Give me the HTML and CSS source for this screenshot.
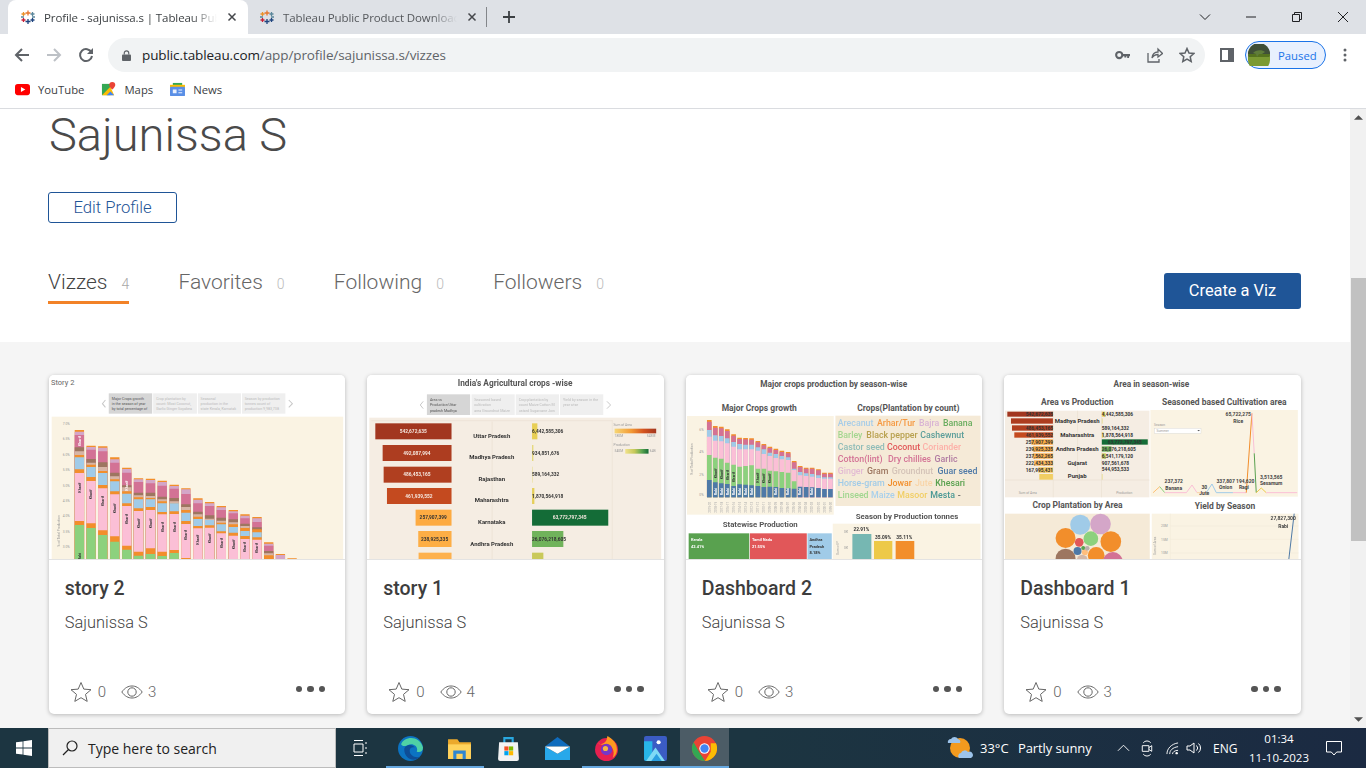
FILE: index.html
```html
<!DOCTYPE html>
<html lang="en">
<head>
<meta charset="utf-8">
<title>Profile - sajunissa.s | Tableau Public</title>
<link rel="stylesheet" href="styles.css">
</head>
<body>
<svg class="defs" width="0" height="0" aria-hidden="true">
  <defs>
    <symbol id="tableau" viewBox="0 0 16 16">
      <path stroke="#e8762b" d="M8 1.500v5M5.500 4h5"/>
      <path stroke="#1f447e" d="M8 10v5M5.500 12.500h5"/>
      <path stroke="#c72037" d="M3.500 9v4M1.500 11h4"/>
      <path stroke="#5b879b" d="M12.500 3v4M10.500 5h4"/>
      <path stroke="#eb9129" d="M3.500 3v4M1.500 5h4"/>
      <path stroke="#1f447e" d="M12.500 9v4M10.500 11h4"/>
      <path stroke="#59879b" d="M1 8h3M12 8h3"/>
    </symbol>
    <symbol id="star" viewBox="0 0 22 22">
      <path fill="none" stroke="#666" stroke-width="1" d="M11 1.500l2.800 6.600 7.200.6-5.500 4.700 1.700 7-6.200-3.700-6.200 3.700 1.700-7L1 8.700l7.200-.6z"/>
    </symbol>
    <symbol id="eye" viewBox="0 0 22 14">
      <path fill="none" stroke="#666" d="M.8 7C4 2.600 7.300 1 11 1s7 1.600 10.200 6C18 11.400 14.700 13 11 13S4 11.400.8 7z"/>
      <circle cx="11" cy="7" r="4.200" fill="none" stroke="#666"/>
    </symbol>
  </defs>
</svg>

<header class="chrome">
  <div class="tabstrip">
    <div class="tab tab-active">
      <svg class="fav"><use href="#tableau"/></svg>
      <span class="tab-title">Profile - sajunissa.s | Tableau Public</span>
      <svg class="tab-x" viewBox="0 0 10 10"><path d="M1.500 1.500l7 7M8.500 1.500l-7 7"/></svg>
    </div>
    <div class="tab tab-idle">
      <svg class="fav"><use href="#tableau"/></svg>
      <span class="tab-title">Tableau Public Product Download</span>
      <svg class="tab-x" viewBox="0 0 10 10"><path d="M1.500 1.500l7 7M8.500 1.500l-7 7"/></svg>
    </div>
    <span class="tab-sep"></span>
    <svg class="tab-plus" viewBox="0 0 12 12"><path d="M6 0v12M0 6h12"/></svg>
    <div class="win">
      <svg class="win-ico" viewBox="0 0 12 12"><path d="M1 3.500l5 5 5-5"/></svg>
      <svg class="win-ico" viewBox="0 0 12 12"><path d="M1 6h10"/></svg>
      <svg class="win-ico" viewBox="0 0 12 12"><path d="M1.500 3.500h7v7h-7zM3.500 3.500v-2h7v7h-2"/></svg>
      <svg class="win-ico" viewBox="0 0 12 12"><path d="M1 1l10 10M11 1L1 11"/></svg>
    </div>
  </div>
  <div class="toolbar">
    <svg class="nav" viewBox="0 0 16 16"><path class="nav-dark" d="M15 8H2M8 2L2 8l6 6"/></svg>
    <svg class="nav" viewBox="0 0 16 16"><path class="nav-off" d="M1 8h13M8 2l6 6-6 6"/></svg>
    <svg class="nav" viewBox="0 0 16 16"><path class="nav-dark" d="M13.500 5.500A6 6 0 1 0 14 9"/><path class="nav-fill" d="M15 1v6H9z"/></svg>
    <div class="omnibox">
      <svg class="lock" viewBox="0 0 10 12"><path fill="#5f6368" d="M1 5h8a1 1 0 0 1 1 1v5a1 1 0 0 1-1 1H1a1 1 0 0 1-1-1V6a1 1 0 0 1 1-1z"/><path fill="none" stroke="#5f6368" stroke-width="1.300" d="M2.500 5V3.300a2.500 2.500 0 0 1 5 0V5"/></svg>
      <span class="url"><b>public.tableau.com</b>/app/profile/sajunissa.s/vizzes</span>
      <svg class="omni-ico key" viewBox="0 0 16 10"><circle cx="4.500" cy="5" r="3.300" fill="none" stroke="#5f6368" stroke-width="2.200"/><path fill="#5f6368" d="M8 3.800h8v2.400h-1v2h-2v-2h-1v1.500h-2V6.200H8z"/></svg>
      <svg class="omni-ico share" viewBox="0 0 16 16"><path d="M1 6v9h11v-3M5 11c.5-4 3-6 6-6V2l4.500 4.500L11 10V7.500C8.500 7.500 6.500 8.500 5 11z"/></svg>
      <svg class="omni-ico star2" viewBox="0 0 16 16"><path d="M8 1.500l2 4.500 4.800.5-3.600 3.200 1 4.800L8 12.100l-4.200 2.400 1-4.800L1.200 6.500 6 6z"/></svg>
    </div>
    <svg class="panel" viewBox="0 0 14 14"><path fill="#5f6368" d="M0 0h14v14H0z"/><path fill="#fff" d="M2 2h6v10H2z"/></svg>
    <div class="paused">
      <svg class="avatar" viewBox="0 0 22 22"><circle cx="11" cy="11" r="11" fill="#55731f"/><path fill="#3f4f38" d="M0 10a11 11 0 0 1 22 0z"/><path fill="#7b9a33" d="M0 13h22v3a11 11 0 0 1-22 0z"/><path fill="#5f7d3a" d="M5 9c2-3 9-4 12-1l-3 2-3 0-2 3-1-3z"/></svg>
      <span>Paused</span>
    </div>
    <svg class="kebab" viewBox="0 0 4 14"><circle cx="2" cy="2" r="1.500"/><circle cx="2" cy="7" r="1.500"/><circle cx="2" cy="12" r="1.500"/></svg>
  </div>
  <div class="bookmarks">
    <span class="bm">
      <svg class="bm-ico" viewBox="0 0 16 12"><rect width="16" height="12" rx="3" fill="#f00"/><path fill="#fff" d="M6.300 3.300v5.400L11 6z"/></svg>YouTube
    </span>
    <span class="bm">
      <svg class="bm-ico" viewBox="0 0 16 16"><path fill="#34a853" d="M1 2h9v12H1z"/><path fill="#fbbc04" d="M1 14l9-9 4 9z"/><path fill="#4285f4" d="M6 14l4-4 4 4z"/><path fill="#ea4335" d="M12 0a3.200 3.200 0 0 1 3.200 3.200C15.200 5.500 12 8 12 8S8.800 5.500 8.800 3.200A3.200 3.200 0 0 1 12 0z"/></svg>Maps
    </span>
    <span class="bm">
      <svg class="bm-ico" viewBox="0 0 16 14"><path fill="#34a853" d="M3 0h10v4H3z"/><path fill="#fbbc04" d="M0 2h16v3H0z"/><rect y="4" width="16" height="10" rx="1" fill="#5a8fe6"/><path fill="#e8f0fe" d="M3 7h4v4H3zM9 7h4v1H9zM9 10h4v1H9z"/></svg>News
    </span>
  </div>
</header>

<div class="viewport">
  <main class="page">
    <section class="profile">
      <h1 class="name">Sajunissa S</h1>
      <a class="edit">Edit Profile</a>
      <div class="tabs-row">
        <nav class="tabs">
          <a class="ptab ptab-on">Vizzes<small>4</small></a>
          <a class="ptab">Favorites<small>0</small></a>
          <a class="ptab">Following<small>0</small></a>
          <a class="ptab">Followers<small>0</small></a>
        </nav>
        <a class="create">Create a Viz</a>
      </div>
    </section>
    <section class="gallery">

      <article class="card">
        <svg class="thumb" viewBox="27 15 888 552" preserveAspectRatio="none">
          <rect x="27" y="15" width="888" height="552" fill="#fff"/>
          <text x="33" y="46" class="t-story">Story 2</text>
          <path class="chev" d="M196 90l-9 11 9 11M745 90l11 11-11 11"/>
          <rect x="206" y="70" width="130" height="61" fill="#d6d6d6"/>
          <rect x="339" y="70" width="131" height="61" fill="#efefef"/>
          <rect x="473" y="70" width="129" height="61" fill="#efefef"/>
          <rect x="605" y="70" width="130" height="61" fill="#efefef"/>
          <g class="t-tab-on"><text x="215" y="91">Major Crops growth</text><text x="215" y="106">in the season of year</text><text x="215" y="121">by total percentage of</text></g>
          <g class="t-tab"><text x="348" y="91">Crop plantation by</text><text x="348" y="106">count: Most Coconut,</text><text x="348" y="121">Garlic Ginger Soyabea</text>
          <text x="481" y="91">Seasonal</text><text x="481" y="106">production in the</text><text x="481" y="121">state Kerala, Karnatak</text>
          <text x="613" y="91">Season by production</text><text x="613" y="106">tonnes count of</text><text x="613" y="121">production 9,983,738</text></g>
          <rect x="35" y="140" width="873" height="427" fill="#faf3e3"/>
          <g class="t-axis"><text x="68" y="164">7.0%</text><text x="68" y="210">6.5%</text><text x="68" y="257">6.0%</text><text x="68" y="303">5.5%</text><text x="68" y="350">5.0%</text><text x="68" y="396">4.5%</text><text x="68" y="442">4.0%</text><text x="68" y="489">3.5%</text><text x="68" y="535">3.0%</text>
          <text transform="translate(60 530) rotate(-90)">% of Total Production</text></g>
          <g class="bars28">
            <path stroke="#f28e2b" d="M118 180V567M153 227V567M188 229V567M224 262V567M260 293V567M295 325V567M331 326V567M366 332V567M402 344V567M437 355V567M473 385V567M508 396V567M543 408V567M579 420V567M614 433V567M650 441V567M685 517V567M720 552V567M755 565V567"/>
            <path stroke="#d4a6c8" d="M118 185V567M153 231V567M188 233V567M224 268V567M260 297V567M295 328V567M331 330V567M366 336V567M402 348V567M437 358V567M473 389V567M508 400V567M543 412V567M579 424V567M614 437V567M650 445V567M685 521V567M720 555V567"/>
            <path stroke="#d37295" d="M118 195V567M153 239V567M188 244V567M224 278V567M260 308V567M295 336V567M331 340V567M366 347V567M402 356V567M437 372V567M473 400V567M508 408V567M543 420V567M579 430V567M614 445V567M650 456V567M685 527V567"/>
            <path stroke="#9d7660" d="M118 232V567M153 267V567M188 277V567M224 308V567M260 346V567M295 368V567M331 368V567M366 380V567M402 384V567M437 403V567M473 425V567M508 436V567M543 443V567M579 448V567M614 461V567M650 472V567M685 543V567"/>
            <path stroke="#d7b5a6" d="M118 244V567M153 278V567M188 291V567M224 319V567M260 352V567M295 376V567M331 378V567M366 388V567M402 394V567M437 411V567M473 433V567M508 446V567M543 452V567M579 457V567M614 468V567M650 480V567M685 550V567"/>
            <path stroke="#f28e2b" d="M118 255V567M153 284V567M188 303V567M224 328V567M260 364V567M295 382V567M331 384V567M366 394V567M402 400V567M437 420V567M473 440V567M508 452V567M543 458V567M579 463V567M614 474V567M650 478V567M685 556V567"/>
            <path stroke="#a0cbe8" d="M118 262V567M153 291V567M188 309V567M224 334V567M260 371V567M295 388V567M331 388V567M366 400V567M402 400V567M437 428V567M473 447V567M508 450V567M543 463V567M579 471V567M614 483V567M650 487V567"/>
            <path stroke="#f28e2b" d="M118 298V567M153 321V567M188 345V567M224 364V567M260 400V567M295 415V567M331 411V567M366 426V567M402 424V567M437 453V567M473 468V567M508 466V567M543 484V567M579 488V567M614 498V567M650 502V567M685 558V567"/>
            <path stroke="#fbbfd6" d="M118 309V567M153 333V567M188 355V567M224 373V567M260 408V567M295 423V567M331 420V567M366 433V567M402 432V567M437 462V567M473 475V567M508 473V567M543 490V567M579 497V567M614 507V567M650 509V567"/>
            <path stroke="#f28e2b" d="M118 453V567M153 460V567M188 481V567M224 499V567M260 527V567M295 545V567M331 535V567M366 545V567M402 540V567M437 564V567"/>
            <path stroke="#8cd17d" d="M118 465V567M153 474V567M188 495V567M224 515V567M260 539V567M295 557V567M331 552V567M366 558V567M402 549V567"/>
          </g>
          <g class="t-bar">
            <text transform="translate(122 228) rotate(-90)" fill="#fff">Kharif</text><text transform="translate(122 368) rotate(-90)">Kharif</text><text transform="translate(157 388) rotate(-90)">Kharif</text><text transform="translate(192 408) rotate(-90)">Kharif</text><text transform="translate(228 430) rotate(-90)">Kharif</text><text transform="translate(264 362) rotate(-90)" fill="#fff">Kharif</text><text transform="translate(264 462) rotate(-90)">Kharif</text><text transform="translate(299 475) rotate(-90)">Kharif</text><text transform="translate(335 475) rotate(-90)">Kharif</text><text transform="translate(370 486) rotate(-90)">Kharif</text><text transform="translate(406 486) rotate(-90)">Kharif</text><text transform="translate(441 510) rotate(-90)">Kharif</text><text transform="translate(477 524) rotate(-90)">Kharif</text><text transform="translate(512 520) rotate(-90)">Kharif</text><text transform="translate(547 534) rotate(-90)">Kharif</text><text transform="translate(583 538) rotate(-90)">Kharif</text><text transform="translate(618 546) rotate(-90)">Kharif</text><text transform="translate(654 549) rotate(-90)">Kharif</text><text transform="translate(122 570) rotate(-90)">Rabi</text>
          </g>
        </svg>
        <div class="body">
          <h2 class="title">story 2</h2>
          <p class="author">Sajunissa S</p>
          <div class="foot">
            <svg class="ico-star"><use href="#star"/></svg><span class="num">0</span>
            <svg class="ico-eye"><use href="#eye"/></svg><span class="num">3</span>
            <span class="dots"><i></i><i></i><i></i></span>
          </div>
        </div>
      </article>

      <article class="card">
        <svg class="thumb" viewBox="21 15 891 552" preserveAspectRatio="none">
          <rect x="21" y="15" width="891" height="552" fill="#fff"/>
          <text x="466" y="48" class="t-h">India's Agricultural crops -wise</text>
          <path class="chev" d="M190 94l-9 11 9 11M742 94l11 11-11 11"/>
          <rect x="201" y="73" width="130" height="62" fill="#d6d6d6"/>
          <rect x="335" y="73" width="130" height="62" fill="#efefef"/>
          <rect x="468" y="73" width="130" height="62" fill="#efefef"/>
          <rect x="601" y="73" width="130" height="62" fill="#efefef"/>
          <g class="t-tab-on"><text x="210" y="94">Area vs</text><text x="210" y="109">Production Uttar</text><text x="210" y="125">pradesh Madhya</text></g>
          <g class="t-tab"><text x="343" y="94">Seasoned based</text><text x="343" y="109">cultivation</text><text x="343" y="125">area Groundnut Maize</text>
          <text x="477" y="94">Crop plantation by</text><text x="477" y="109">count Maize Cotton M</text><text x="477" y="125">ustard Sugarcane Jow</text>
          <text x="610" y="94">Yield by season in the</text><text x="610" y="109">year wise</text></g>
          <rect x="28" y="143" width="877" height="424" fill="#f5ede3"/>
          <path class="grid" d="M397 155V567M758 150V567M34 152H758"/>
          <g class="hbars">
            <rect x="46" y="160" width="229" height="48" fill="#a2361f"/>
            <rect x="68" y="225" width="207" height="48" fill="#ad3d20"/>
            <rect x="71" y="290" width="204" height="48" fill="#b03f20"/>
            <rect x="81" y="354" width="194" height="48" fill="#c44a1f"/>
            <rect x="167" y="419" width="108" height="48" fill="#fdab42"/>
            <rect x="175" y="483" width="100" height="48" fill="#fdae45"/>
            <rect x="176" y="548" width="99" height="48" fill="#fdb14e"/>
            <rect x="517" y="160" width="16" height="48" fill="#e8cf55"/>
            <rect x="517" y="225" width="4" height="48" fill="#e5d87a"/>
            <rect x="517" y="290" width="2" height="48" fill="#eadf9e"/>
            <rect x="517" y="354" width="7" height="48" fill="#e5cf5a"/>
            <rect x="517" y="419" width="229" height="48" fill="#146c37"/>
            <rect x="517" y="483" width="94" height="48" fill="#70b35b"/>
            <rect x="517" y="548" width="34" height="48" fill="#c9c95a"/>
          </g>
          <g class="t-val">
            <text x="160" y="189" fill="#fff" text-anchor="middle">542,672,635</text>
            <text x="171" y="254" fill="#fff" text-anchor="middle">492,087,994</text>
            <text x="171" y="319" fill="#fff" text-anchor="middle">486,453,165</text>
            <text x="177" y="384" fill="#fff" text-anchor="middle">461,939,552</text>
            <text x="220" y="448" text-anchor="middle">257,907,399</text>
            <text x="224" y="513" text-anchor="middle">238,925,335</text>
            <text x="517" y="189">6,442,585,306</text>
            <text x="517" y="254">934,851,676</text>
            <text x="517" y="319">589,164,332</text>
            <text x="517" y="384">1,870,564,918</text>
            <text x="630" y="448" fill="#fff" text-anchor="middle">63,772,797,345</text>
            <text x="517" y="513">26,076,218,605</text>
          </g>
          <g class="t-state">
            <text x="396" y="203">Uttar Pradesh</text><text x="396" y="268">Madhya Pradesh</text><text x="396" y="332">Rajasthan</text><text x="396" y="397">Maharashtra</text><text x="396" y="462">Karnataka</text><text x="396" y="527">Andhra Pradesh</text>
          </g>
          <defs>
            <linearGradient id="gArea"><stop offset="0" stop-color="#f6d776"/><stop offset=".4" stop-color="#f39a35"/><stop offset=".7" stop-color="#d4531f"/><stop offset="1" stop-color="#a2361f"/></linearGradient>
            <linearGradient id="gProd"><stop offset="0" stop-color="#f1e28c"/><stop offset=".4" stop-color="#c5c85a"/><stop offset=".7" stop-color="#5fa852"/><stop offset="1" stop-color="#146c37"/></linearGradient>
          </defs>
          <rect x="765" y="176" width="125" height="14" fill="url(#gArea)"/>
          <rect x="797" y="237" width="70" height="14" fill="url(#gProd)"/>
          <g class="t-axis"><text x="762" y="167">Sum of Area</text><text x="765" y="202">180M</text><text x="862" y="202">543M</text><text x="762" y="227">Production</text><text x="765" y="247">540M</text><text x="871" y="247">64B</text></g>
        </svg>
        <div class="body">
          <h2 class="title">story 1</h2>
          <p class="author">Sajunissa S</p>
          <div class="foot">
            <svg class="ico-star"><use href="#star"/></svg><span class="num">0</span>
            <svg class="ico-eye"><use href="#eye"/></svg><span class="num">4</span>
            <span class="dots"><i></i><i></i><i></i></span>
          </div>
        </div>
      </article>

      <article class="card">
        <svg class="thumb" viewBox="18 15 891 552" preserveAspectRatio="none">
          <rect x="18" y="15" width="891" height="552" fill="#fff"/>
          <text x="462" y="52" class="t-h">Major crops production by season-wise</text>
          <text x="238" y="123" class="t-h2">Major Crops growth</text>
          <text x="686" y="122" class="t-h2">Crops(Plantation by count)</text>
          <rect x="21" y="138" width="441" height="296" fill="#faf3e3"/>
          <rect x="467" y="137" width="436" height="271" fill="#f5ead7"/>
          <g class="t-axis"><text x="58" y="182">6%</text><text x="58" y="249">4%</text><text x="58" y="317">2%</text><text x="58" y="377">0%</text><text transform="translate(40 315) rotate(-90)">% of Total Production</text></g>
          <g class="bars14">
            <path stroke="#f28e2b" d="M88 150V382M106 168V382M124 170V382M142 178V382M161 193V382M179 203V382M197 204V382M215 205V382M234 213V382M252 222V382M270 230V382M288 236V382M306 242V382M325 246V382M343 273V382M361 288V382M379 293V382M397 293V382M416 298V382M434 308V382M452 308V382"/>
            <path stroke="#d37295" d="M88 155V382M106 173V382M124 175V382M142 183V382M161 197V382M179 207V382M197 208V382M215 209V382M234 217V382M252 226V382M270 234V382M288 240V382M306 246V382M325 250V382M343 277V382M361 291V382M379 296V382M397 296V382M416 301V382M434 311V382M452 311V382"/>
            <path stroke="#a0cbe8" d="M88 180V382M106 196V382M124 198V382M142 205V382M161 216V382M179 222V382M197 224V382M215 224V382M234 232V382M252 238V382M270 248V382M288 252V382M306 258V382M325 262V382M343 296V382M361 306V382M379 310V382M397 312V382M416 316V382M434 322V382M452 322V382"/>
            <path stroke="#fbbfd6" d="M88 200V382M106 212V382M124 214V382M142 220V382M161 230V382M179 238V382M197 238V382M215 238V382M234 242V382M252 252V382M270 258V382M288 264V382M306 268V382M325 270V382M343 300V382M361 316V382M379 318V382M397 320V382M416 324V382M434 326V382M452 326V382"/>
            <path stroke="#8cd17d" d="M88 255V382M106 263V382M124 266V382M142 278V382M161 284V382M179 290V382M197 288V382M215 286V382M234 296V382M252 296V382M270 302V382M288 304V382M306 306V382M325 308V382M343 334V382"/>
            <path stroke="#4e79a7" d="M88 330V382M106 337V382M124 340V382M142 342V382M161 348V382M179 343V382M197 344V382M215 346V382M234 348V382M252 351V382M270 350V382M288 351V382M306 354V382M325 355V382M343 356V382M361 350V382M379 351V382M397 352V382M416 354V382M434 357V382M452 357V382"/>
          </g>
          <g class="t-bar"><text transform="translate(110 325) rotate(-90)">Kharif</text><text transform="translate(128 328) rotate(-90)">Kharif</text><text transform="translate(146 330) rotate(-90)">Kharif</text><text transform="translate(165 336) rotate(-90)">Kharif</text><text transform="translate(238 338) rotate(-90)">Kharif</text><text transform="translate(256 340) rotate(-90)">Kharif</text><text transform="translate(274 340) rotate(-90)">Kharif</text><text transform="translate(110 376) rotate(-90)" fill="#fff">Rabi</text><text transform="translate(128 376) rotate(-90)" fill="#fff">Rabi</text><text transform="translate(146 376) rotate(-90)" fill="#fff">Rabi</text><text transform="translate(165 376) rotate(-90)" fill="#fff">Rabi</text><text transform="translate(183 376) rotate(-90)" fill="#fff">Rabi</text><text transform="translate(201 376) rotate(-90)" fill="#fff">Rabi</text><text transform="translate(219 376) rotate(-90)" fill="#fff">Rabi</text><text transform="translate(292 376) rotate(-90)" fill="#fff">Rabi</text><text transform="translate(329 376) rotate(-90)" fill="#fff">Rabi</text><text transform="translate(365 376) rotate(-90)" fill="#fff">Rabi</text><text transform="translate(401 376) rotate(-90)" fill="#fff">Rabi</text></g>
          <g class="t-years"><text transform="translate(92 428) rotate(-90)">2019-20</text><text transform="translate(110 428) rotate(-90)">2018-19</text><text transform="translate(128 428) rotate(-90)">2017-18</text><text transform="translate(146 428) rotate(-90)">2016-17</text><text transform="translate(165 428) rotate(-90)">2015-16</text><text transform="translate(183 428) rotate(-90)">2014-15</text><text transform="translate(201 428) rotate(-90)">2013-14</text><text transform="translate(219 428) rotate(-90)">2012-13</text><text transform="translate(238 428) rotate(-90)">2011-12</text><text transform="translate(256 428) rotate(-90)">2010-11</text><text transform="translate(274 428) rotate(-90)">2009-10</text><text transform="translate(292 428) rotate(-90)">2008-09</text><text transform="translate(310 428) rotate(-90)">2007-08</text><text transform="translate(329 428) rotate(-90)">2006-07</text><text transform="translate(347 428) rotate(-90)">2005-06</text><text transform="translate(365 428) rotate(-90)">2004-05</text><text transform="translate(383 428) rotate(-90)">2003-04</text><text transform="translate(401 428) rotate(-90)">2002-03</text><text transform="translate(420 428) rotate(-90)">2001-02</text><text transform="translate(438 428) rotate(-90)">2000-01</text><text transform="translate(456 428) rotate(-90)">1999-00</text></g>
          <g class="t-cloud">
            <text x="474" y="169" fill="#a8cde8">Arecanut</text><text x="592" y="169" fill="#f59a44">Arhar/Tur</text><text x="718" y="169" fill="#d9b4d4">Bajra</text><text x="790" y="169" fill="#69ad5f">Banana</text>
            <text x="474" y="205" fill="#a3d68f">Barley</text><text x="560" y="205" fill="#b8a04e">Black pepper</text><text x="722" y="205" fill="#5c9e9a">Cashewnut</text>
            <text x="474" y="241" fill="#8fbcb8">Castor seed</text><text x="622" y="241" fill="#e15759">Coconut</text><text x="729" y="241" fill="#fdb0a8">Coriander</text>
            <text x="474" y="277" fill="#d37295">Cotton(lint)</text><text x="625" y="277" fill="#d37295">Dry chillies</text><text x="765" y="277" fill="#b07aa1">Garlic</text>
            <text x="474" y="313" fill="#e3bbd3">Ginger</text><text x="562" y="313" fill="#9d7660">Gram</text><text x="636" y="313" fill="#d4c3b8">Groundnut</text><text x="774" y="313" fill="#4e79a7">Guar seed</text>
            <text x="474" y="349" fill="#a0cbe8">Horse-gram</text><text x="624" y="349" fill="#f28e2b">Jowar</text><text x="706" y="349" fill="#f9d5a8">Jute</text><text x="767" y="349" fill="#59a14f">Khesari</text>
            <text x="474" y="385" fill="#a0d68f">Linseed</text><text x="574" y="385" fill="#a8d0ec">Maize</text><text x="653" y="385" fill="#f1ce63">Masoor</text><text x="752" y="385" fill="#499894">Mesta</text><text x="835" y="385" fill="#666">-</text>
          </g>
          <text x="682" y="446" class="t-h2 s22">Season by Production tonnes</text>
          <rect x="459" y="461" width="444" height="106" fill="#faf3e3"/>
          <rect x="518" y="492" width="57" height="75" fill="#76b7b2"/>
          <rect x="583" y="513" width="55" height="54" fill="#edc948"/>
          <rect x="648" y="513" width="56" height="54" fill="#f28e2b"/>
          <g class="t-val"><text x="521" y="484">22.91%</text><text x="586" y="507">35.09%</text><text x="650" y="507">35.11%</text></g>
          <g class="t-axis"><text x="493" y="488">0K</text><text x="493" y="538">0K</text><text transform="translate(478 555) rotate(-90)">Sum of P</text></g>
          <text x="241" y="471" class="t-h2 s22">Statewise Production</text>
          <rect x="26" y="490" width="182" height="80" fill="#59a14f"/>
          <rect x="210" y="490" width="171" height="80" fill="#e15759"/>
          <rect x="383" y="490" width="73" height="80" fill="#a0cbe8"/>
          <g class="t-tree"><text x="33" y="513">Kerala</text><text x="33" y="533">42.41%</text><text x="216" y="513">Tamil Nadu</text><text x="216" y="533">21.55%</text></g>
          <g class="t-tree-d"><text x="389" y="513">Andhra</text><text x="389" y="533">Pradesh</text><text x="389" y="553">8.18%</text></g>
        </svg>
        <div class="body">
          <h2 class="title">Dashboard 2</h2>
          <p class="author">Sajunissa S</p>
          <div class="foot">
            <svg class="ico-star"><use href="#star"/></svg><span class="num">0</span>
            <svg class="ico-eye"><use href="#eye"/></svg><span class="num">3</span>
            <span class="dots"><i></i><i></i><i></i></span>
          </div>
        </div>
      </article>

      <article class="card">
        <svg class="thumb" viewBox="12 15 891 552" preserveAspectRatio="none">
          <rect x="12" y="15" width="891" height="552" fill="#fff"/>
          <text x="455" y="52" class="t-h">Area in season-wise</text>
          <text x="232" y="106" class="t-h2">Area vs Production</text>
          <text x="674" y="104" class="t-h2">Seasoned based Cultivation area</text>
          <rect x="15" y="122" width="434" height="260" fill="#f5ede3"/>
          <rect x="452" y="120" width="443" height="260" fill="#faf3e3"/>
          <path class="grid" d="M160 122V382M233 122V330M305 122V382M15 330H449"/>
          <rect x="22" y="125" width="137" height="15" fill="#a2361f"/>
          <rect x="33" y="145" width="126" height="16" fill="#ad3d20"/>
          <rect x="36" y="166" width="123" height="16" fill="#b03f20"/>
          <rect x="43" y="187" width="116" height="16" fill="#c44a1f"/>
          <rect x="94" y="208" width="65" height="16" fill="#fdab42"/>
          <rect x="99" y="229" width="60" height="16" fill="#fdae45"/>
          <rect x="99" y="250" width="60" height="16" fill="#fdb14e"/>
          <rect x="102" y="271" width="57" height="16" fill="#fdb85a"/>
          <rect x="115" y="292" width="44" height="16" fill="#f5c75a"/>
          <rect x="118" y="312" width="41" height="17" fill="#f1ce63"/>
          <rect x="306" y="125" width="10" height="15" fill="#e8cf55"/>
          <rect x="306" y="145" width="2" height="16" fill="#e5d87a"/>
          <rect x="306" y="187" width="5" height="16" fill="#e5cf5a"/>
          <rect x="306" y="208" width="138" height="16" fill="#146c37"/>
          <rect x="306" y="229" width="29" height="16" fill="#70b35b"/>
          <rect x="306" y="250" width="12" height="16" fill="#c9c95a"/>
          <rect x="306" y="312" width="2" height="17" fill="#e5d87a"/>
          <g class="t-val">
            <text x="159" y="138" text-anchor="end" fill="#e8c8b0">542,672,635</text><text x="159" y="179" text-anchor="end" fill="#f3dfd0">486,453,165</text><text x="159" y="200" text-anchor="end" fill="#f3dfd0">461,939,552</text><text x="159" y="221" text-anchor="end">257,907,399</text><text x="159" y="242" text-anchor="end">239,925,335</text><text x="159" y="263" text-anchor="end">237,562,265</text><text x="159" y="284" text-anchor="end">222,434,333</text><text x="159" y="305" text-anchor="end">167,995,431</text>
            <text x="306" y="139">4,442,585,306</text><text x="306" y="179">589,164,332</text><text x="306" y="200">1,878,564,918</text><text x="375" y="221" text-anchor="middle">63,772,797,345</text><text x="306" y="242">26,076,218,605</text><text x="306" y="263">6,541,179,120</text><text x="306" y="284">907,561,678</text><text x="306" y="304">544,953,533</text>
          </g>
          <g class="t-state"><text x="232" y="160">Madhya Pradesh</text><text x="232" y="202">Maharashtra</text><text x="232" y="243">Andhra Pradesh</text><text x="232" y="285">Gujarat</text><text x="232" y="325">Punjab</text></g>
          <g class="t-axis"><text x="56" y="371">Sum of Area</text><text x="349" y="371">Production</text><text x="463" y="167">Season</text></g>
          <rect x="464" y="175" width="140" height="15" fill="#fff" stroke="#ccc"/>
          <text x="470" y="186" class="t-axis-one">Summer</text>
          <path fill="#555" d="M593 180h8l-4 4z"/>
          <g class="line">
            <path stroke="#fdbf6f" d="M460 368L480 350"/><path stroke="#8cd17d" d="M480 350L495 368"/><path stroke="#fbbfd6" d="M495 368H560L577 345L592 368"/><path stroke="#f9d5a8" d="M592 368H620"/><path stroke="#a0cbe8" d="M620 368L637 342L650 368H700"/><path stroke="#fbbfd6" d="M700 368H740"/><path stroke="#f28e2b" d="M740 368L757 130"/><path stroke="#fbbfd6" d="M757 130L764 250"/><path stroke="#59a14f" d="M764 250L770 368"/><path stroke="#edc948" d="M770 368L785 354L800 368"/><path stroke="#fbbfd6" d="M800 368H893"/>
          </g>
          <g class="t-line"><text x="716" y="137">65,722,275</text><text x="716" y="158">Rice</text><text x="522" y="338">237,372</text><text x="522" y="359">Banana</text><text x="614" y="356">30</text><text x="614" y="375">Jute</text><text x="678" y="338">337,807</text><text x="678" y="358">Onion</text><text x="737" y="338">194,620</text><text x="733" y="358">Ragi</text><text x="815" y="326">3,513,565</text><text x="815" y="346">Sesamum</text></g>
          <text x="233" y="415" class="t-h2">Crop Plantation by Area</text>
          <text x="676" y="416" class="t-h2">Yield by Season</text>
          <rect x="15" y="431" width="435" height="136" fill="#f5ead7"/>
          <rect x="456" y="431" width="441" height="136" fill="#faf3e3"/>
          <circle cx="241" cy="464" r="30" fill="#a0cbe8"/><circle cx="302" cy="462" r="31" fill="#d4a6c8"/><circle cx="197" cy="504" r="30" fill="#f28e2b"/><circle cx="273" cy="506" r="22" fill="#8cd17d"/><circle cx="333" cy="515" r="31" fill="#f28e2b"/><circle cx="238" cy="517" r="13" fill="#e15759"/><circle cx="197" cy="566" r="30" fill="#9d7660"/><circle cx="233" cy="543" r="12" fill="#4e79a7"/><circle cx="289" cy="556" r="25" fill="#f28e2b"/><circle cx="339" cy="576" r="30" fill="#d37295"/><circle cx="255" cy="547" r="9" fill="#ffbe7d"/><circle cx="250" cy="534" r="6" fill="#59a14f"/><circle cx="262" cy="535" r="7" fill="#bab0ac"/><circle cx="247" cy="570" r="16" fill="#d4b8a8"/>
          <path class="grid-soft" d="M512 431V567M512 468H897M512 508H897M512 549H897"/>
          <path fill="none" stroke="#4e79a7" stroke-width="3" d="M868 567L884 431"/>
          <g class="t-axis"><text x="484" y="472">20M</text><text x="484" y="512">15M</text><text x="484" y="553">10M</text><text transform="translate(470 555) rotate(-90)">Sum of Area</text></g>
          <g class="t-line"><text x="851" y="451">27,827,300</text><text x="851" y="473">Rabi</text></g>
        </svg>
        <div class="body">
          <h2 class="title">Dashboard 1</h2>
          <p class="author">Sajunissa S</p>
          <div class="foot">
            <svg class="ico-star"><use href="#star"/></svg><span class="num">0</span>
            <svg class="ico-eye"><use href="#eye"/></svg><span class="num">3</span>
            <span class="dots"><i></i><i></i><i></i></span>
          </div>
        </div>
      </article>

    </section>
  </main>
  <aside class="scrollbar">
    <svg class="sb-up" viewBox="0 0 10 5"><path d="M5 0l5 5H0z"/></svg>
    <div class="sb-thumb"></div>
    <svg class="sb-down" viewBox="0 0 10 5"><path d="M0 0h10L5 5z"/></svg>
  </aside>
</div>

<footer class="taskbar">
  <div class="start">
    <svg viewBox="0 0 16 16" class="winlogo"><path d="M0 2.300L6.600 1.400V7.600H0zM7.400 1.300L16 0V7.600H7.400zM0 8.400H6.600V14.600L0 13.700zM7.400 8.400H16V16L7.400 14.700z"/></svg>
  </div>
  <div class="search">
    <svg class="search-ico" viewBox="0 0 16 16"><circle cx="10" cy="6" r="5"/><path d="M6.500 9.500L1 15"/></svg>
    <span>Type here to search</span>
  </div>
  <div class="apps">
    <div class="app first"><svg class="ti" viewBox="0 0 16 16"><path d="M2 .5h9M2 4h9v8H2zM2 15.500h9M14 2v2M14 7v2M14 12v2" fill="none" stroke="#fff"/></svg></div>
    <div class="app run"><svg class="ai" viewBox="0 0 24 24"><circle cx="12" cy="12" r="12" fill="#0c73c2"/><path fill="#4fd1a5" d="M3 8C5 1 20-2 24 11c0 4-3 5-6 4 2-5-4-9-9-6-3 1-5 1-6-1z"/><path fill="#0e4d96" d="M6 13c0-5 8-6 10-2-4-1-6 2-4 6 2 3 6 4 9 3-5 6-15 2-15-7z"/></svg></div>
    <div class="app run"><svg class="ai" viewBox="0 0 24 24"><path fill="#eba92c" d="M1 3h9l2 3h11v16H1z"/><path fill="#ffd35c" d="M1 8h22v14H1z"/><path fill="#2f86d0" d="M6 22v-8h12v8h-3v-5H9v5z"/></svg></div>
    <div class="app"><svg class="ai" viewBox="0 0 24 24"><path fill="none" stroke="#29a8e0" stroke-width="2" d="M8 7V2h8v5"/><path fill="#f2f2f2" d="M3 6h18l1 16a2 2 0 0 1-2 2H4a2 2 0 0 1-2-2z"/><path fill="#f25022" d="M8 10h4v4H8z"/><path fill="#7fba00" d="M12.500 10h4v4h-4z"/><path fill="#00a4ef" d="M8 14.500h4v4H8z"/><path fill="#ffb900" d="M12.500 14.500h4v4h-4z"/></svg></div>
    <div class="app"><svg class="ai" viewBox="0 0 24 24"><path fill="#0f6cbd" d="M12 1l12 9H0z"/><path fill="#28a8ea" d="M0 10l12 7 12-7v13H0z"/><path fill="#fff" d="M0 10h24l-12 7z"/></svg></div>
    <div class="app run"><svg class="ai" viewBox="0 0 24 24"><circle cx="12" cy="13" r="11" fill="#e6204f"/><path fill="#ff9a1f" d="M4 6c1 3 3 2 5 1 4-2 3-5 4-7 5 3 9 7 9 13 0 3-1 6-4 8 3-8-2-14-8-13-3 1-5 0-6-2z"/><circle cx="12" cy="13" r="5.500" fill="#7537c6"/><circle cx="11" cy="12" r="2.500" fill="#f5b642"/></svg></div>
    <div class="app run"><svg class="ai" viewBox="0 0 24 24"><rect x="1" width="22" height="24" rx="2" fill="#3b5cc4"/><path fill="#28b6e8" d="M1 5h8v19H3a2 2 0 0 1-2-2z"/><path fill="#7fdaf5" d="M3 24l9-13 9 13z"/><path fill="#2a9fe0" d="M8 24l5-7 5 7z"/><circle cx="15" cy="6" r="2" fill="#fff"/></svg></div>
    <div class="app run active"><svg class="ai" viewBox="0 0 24 24"><circle cx="12" cy="12" r="12" fill="#ea4335"/><path fill="#34a853" d="M12 24A12 12 0 0 1 1.600 6L7 15.500l5.500 8.500z"/><path fill="#fbbc04" d="M23 7a12 12 0 0 1-10.500 17L18 15V7z"/><path fill="#fff" d="M7 12a5 5 0 1 0 10 0 5 5 0 0 0-10 0z"/><circle cx="12" cy="12" r="4" fill="#4285f4"/></svg></div>
  </div>
  <div class="tray">
    <svg class="weather" viewBox="0 0 26 26"><circle cx="13" cy="13" r="10" fill="#f39a1e"/><path fill="#9cc3ea" d="M1 8a3 3 0 0 1 3-4 4 4 0 0 1 7 0 3 3 0 0 1 2 4zM12 23a3 3 0 0 1 2-5 4 4 0 0 1 7-1 3.200 3.200 0 0 1 3 6z"/></svg>
    <span class="temp">33°C</span>
    <span class="sky">Partly sunny</span>
    <svg class="tr chevup" viewBox="0 0 14 8"><path d="M1 7l6-6 6 6"/></svg>
    <svg class="tr meet" viewBox="0 0 12 18"><path d="M2 3a5 5 0 0 1 8 0M2 15a5 5 0 0 0 8 0M1 6h7v6H1zM8 8l3-2v6l-3-2"/></svg>
    <svg class="tr wifi" viewBox="0 0 14 14"><path d="M1 13C1 7 6 2 13 1M4 13c0-4 3-7 9-8M7 13c0-2 2-4 6-4"/><circle cx="11.500" cy="12" r="1.300" fill="#fff" stroke="none"/></svg>
    <svg class="tr vol" viewBox="0 0 16 14"><path d="M1 5h3l4-3v10L4 9H1zM10.500 4.500a3.500 3.500 0 0 1 0 5M12.500 2.500a6 6 0 0 1 0 9"/></svg>
    <span class="eng">ENG</span>
    <div class="clock"><span>01:34</span><span>11-10-2023</span></div>
    <svg class="notif" viewBox="0 0 16 15"><path d="M.5.500h15v10.500h-4.800L8 14l-2.700-3H.5z"/></svg>
  </div>
</footer>
</body>
</html>
```

FILE: styles.css
```css
* { box-sizing: border-box; }
html, body { margin: 0; padding: 0; width: 1366px; height: 768px; overflow: hidden; background: #fff; }
body { font-family: "Open Sans", "Liberation Sans", sans-serif; display: flex; flex-direction: column; }
.defs { display: block; height: 0; }
a { display: block; }
p, h1, h2 { margin: 0; }

/* browser chrome */
.chrome { height: 109px; flex: none; border-bottom: 1px solid #dadce0; background: #fff; }
.tabstrip { height: 34px; background: #dee1e6; display: flex; align-items: center; padding-left: 8px; }
.tab { height: 34px; display: flex; align-items: center; font-size: 11.500px; letter-spacing: -.1px; color: #45474b; }
.tab-active { width: 240px; background: #fff; border-radius: 8px 8px 0 0; padding: 0 11px 0 12px; color: #3c4043; }
.tab-idle { width: 238px; padding: 0 9px 0 11px; color: #55585c; }
.fav { width: 16px; height: 16px; flex: none; fill: none; stroke-width: 1.300; margin-right: 8px; }
.tab-title { flex: 1; overflow: hidden; white-space: nowrap; -webkit-mask-image: linear-gradient(90deg, #000 85%, transparent); mask-image: linear-gradient(90deg, #000 85%, transparent); }
.tab-x { width: 10px; height: 10px; margin-left: 10px; flex: none; stroke: #45474b; stroke-width: 1.500; fill: none; }
.tab-sep { width: 1px; height: 20px; background: #83868a; margin-right: 16px; }
.tab-plus { width: 12px; height: 12px; stroke: #3c4043; stroke-width: 1.800; fill: none; }
.win { margin-left: auto; display: flex; align-items: center; padding-right: 17px; gap: 34px; }
.win-ico { width: 12px; height: 12px; fill: none; stroke: #202124; stroke-width: 1; }

.toolbar { height: 42px; display: flex; align-items: center; padding-left: 14px; }
.nav { width: 16px; height: 16px; margin-right: 16px; flex: none; }
.nav-dark { fill: none; stroke: #5f6368; stroke-width: 2; }
.nav-off { fill: none; stroke: #bdc1c6; stroke-width: 2; }
.nav-fill { fill: #5f6368; }
.omnibox { width: 1097px; height: 34px; margin-left: -2px; border-radius: 17px; background: #f1f3f4; display: flex; align-items: center; padding-left: 14px; flex: none; }
.lock { width: 9px; height: 11px; margin-right: 11px; flex: none; }
.url { font-size: 13.500px; color: #5f6368; letter-spacing: -.1px; }
.url b { font-weight: 400; color: #202124; }
.omni-ico { width: 16px; height: 16px; flex: none; fill: none; stroke: #5f6368; stroke-width: 1.300; }
.key { margin-left: auto; width: 15px; height: 10px; stroke: none; }
.share { margin-left: 17px; }
.star2 { margin-left: 16px; margin-right: 10px; stroke-width: 1.500; }
.panel { width: 14px; height: 14px; margin-left: 15px; flex: none; }
.paused { width: 81px; height: 28px; margin-left: 11px; border: 1px solid #1a73e8; border-radius: 14px; background: #e8f0fe; display: flex; align-items: center; padding-left: 2px; gap: 8px; font-size: 11.300px; color: #1a73e8; flex: none; }
.avatar { width: 22px; height: 22px; }
.kebab { width: 4px; height: 14px; margin-left: 17px; fill: #5f6368; }

.bookmarks { height: 32px; display: flex; align-items: center; padding-left: 15px; padding-bottom: 6px; gap: 17px; font-size: 11.300px; color: #3c4043; }
.bm { display: flex; align-items: center; gap: 8px; }
.bm-ico { width: 15px; height: 15px; flex: none; }

/* viewport */
.viewport { height: 619px; flex: none; display: flex; overflow: hidden; }
.page { width: 1350px; flex: none; background: #f5f5f5; font-family: Roboto, "Liberation Sans", sans-serif; }
.profile { height: 233px; background: #fff; padding: 0 49px 0 48px; }
.name { font-family: Roboto, "Liberation Sans", sans-serif; font-size: 47px; font-weight: 300; line-height: 52px; padding-left: 1px; color: #4a4a4a; }
.edit { width: 129px; height: 31px; margin-top: 31px; border: 1px solid #1f5597; border-radius: 3px; font-size: 16.700px; font-weight: 300; line-height: 29px; text-align: center; color: #1f5597; }
.tabs-row { display: flex; justify-content: space-between; margin-top: 41px; }
.tabs { display: flex; gap: 49px; }
.ptab { height: 40px; font-size: 21px; font-weight: 300; line-height: 37px; color: #666; white-space: nowrap; }
.ptab small { display: inline-block; width: 8px; font-size: 14px; color: #bbb; margin-left: 14px; }
.ptab-on { color: #444; border-bottom: 3px solid #f28227; }
.ptab-on small { color: #a8a8a8; }
.create { width: 137px; height: 36px; margin-top: 9px; border-radius: 3px; background: #1f5597; color: #fff; font-size: 16.400px; line-height: 36px; text-align: center; }

.gallery { display: grid; grid-template-columns: repeat(4, 1fr); gap: 22px; padding: 33px 49.250px 0 48.750px; }
.card { height: 339px; background: #fff; border-radius: 5px; box-shadow: 0 1px 4px rgba(0,0,0,.25); overflow: hidden; display: flex; flex-direction: column; }
.thumb { display: block; width: 100%; height: 184px; flex: none; filter: blur(.7px); }
.body { flex: 1; border-top: 1px solid #e3e3e3; padding: 17px 20px 0 16px; display: flex; flex-direction: column; }
.title { font-size: 19.500px; font-weight: 500; line-height: 24px; color: #3d3d3d; }
.author { font-size: 16.400px; font-weight: 300; line-height: 20px; margin-top: 12px; color: #444; }
.foot { margin-top: 48px; display: flex; align-items: center; font-size: 15px; font-weight: 300; color: #666; }
.ico-star { width: 22px; height: 22px; margin: 0 6px 0 5px; }
.ico-eye { width: 22px; height: 14px; margin: 0 5px 0 15px; }
.num { line-height: 22px; }
.dots { margin-left: auto; display: flex; gap: 5px; margin-top: -6px; }
.dots i { width: 6.500px; height: 6.500px; border-radius: 50%; background: #555; }

/* thumbnail contents */
.thumb text { font-family: Roboto, "Liberation Sans", sans-serif; }
.t-story { font-size: 22.500px; fill: #666; }
.t-h { font-size: 25px; font-weight: 700; fill: #555; text-anchor: middle; }
.t-h2 { font-size: 25.500px; font-weight: 700; fill: #555; text-anchor: middle; }
.s22 { font-size: 23.500px; }
.chev { fill: none; stroke: #c8c8c8; stroke-width: 3; }
.t-tab-on text { font-size: 11px; fill: #555; }
.t-tab text { font-size: 11px; fill: #bbb; }
.t-axis text, .t-axis-one { font-size: 10px; fill: #999; }
.t-years text { font-size: 9px; fill: #aaa; }
.bars28 path { stroke-width: 28; fill: none; }
.bars14 path { stroke-width: 14; fill: none; }
.t-bar text { font-size: 11px; font-weight: 700; fill: #333; }
.t-bar text[fill="#fff"] { fill: #fff; }
.t-val text { font-size: 14.500px; font-weight: 700; fill: #333; }
.t-val text[fill="#fff"] { fill: #f5e8e0; }
.t-state text { font-size: 18px; font-weight: 700; fill: #333; text-anchor: middle; }
.grid { fill: none; stroke: #e6dccd; stroke-width: 1.500; }
.grid-soft { fill: none; stroke: #f0e8d6; stroke-width: 1.500; }
.t-cloud text { font-size: 26.500px; font-weight: 500; }
.t-tree text { font-size: 12px; font-weight: 700; fill: #fff; }
.t-tree-d text { font-size: 12px; font-weight: 700; fill: #333; }
.line path { fill: none; stroke-width: 3; }
.t-line text { font-size: 15px; font-weight: 700; fill: #444; text-anchor: middle; }

/* scrollbar */
.scrollbar { width: 16px; flex: none; background: #f1f1f1; display: flex; flex-direction: column; align-items: center; }
.sb-up { width: 9px; height: 5px; margin-top: 6px; fill: #505050; flex: none; }
.sb-thumb { width: 15px; height: 263px; margin-top: 158px; background: #c1c1c1; flex: none; }
.sb-down { width: 9px; height: 5px; margin-top: auto; margin-bottom: 6px; fill: #505050; flex: none; }

/* taskbar */
.taskbar { height: 40px; flex: none; display: flex; align-items: center; background: linear-gradient(90deg, #1c3541, #1c3541 55%, #1b2a42); color: #fff; font-family: "Open Sans", "Liberation Sans", sans-serif; }
.start { width: 48px; display: flex; justify-content: center; }
.winlogo { width: 16px; height: 16px; fill: #fff; }
.search { width: 288px; height: 40px; background: #f0f0f0; border: 1px solid #bcbcbc; display: flex; align-items: center; padding-left: 13px; gap: 10px; color: #222; font-size: 14px; }
.search-ico { width: 16px; height: 16px; fill: none; stroke: #222; stroke-width: 1.200; }
.apps { display: flex; height: 40px; }
.app { width: 49px; height: 40px; display: flex; align-items: center; justify-content: center; border-bottom: 2px solid transparent; padding-top: 2px; }
.first { width: 50px; padding-right: 2px; }
.run { border-bottom-color: #66a8e0; }
.active { background: #4c5c66; }
.ti { width: 16px; height: 16px; }
.ai { width: 25px; height: 25px; }
.tray { flex: 1; display: flex; align-items: center; font-size: 13px; padding-left: 218px; white-space: nowrap; }
.weather { width: 26px; height: 26px; flex: none; }
.temp { margin-left: 7px; width: 29px; }
.sky { margin-left: 9px; width: 74px; letter-spacing: -.1px; }
.tr { fill: none; stroke: #fff; stroke-width: 1; flex: none; }
.chevup { width: 13px; height: 8px; margin-left: 25px; }
.meet { width: 12px; height: 17px; margin-left: 11px; }
.wifi { width: 13px; height: 13px; margin-left: 13px; }
.vol { width: 16px; height: 14px; margin-left: 7px; }
.eng { font-size: 12px; margin-left: 11px; width: 24px; }
.clock { display: flex; flex-direction: column; align-items: center; font-size: 11.500px; line-height: 19px; margin-left: 13px; width: 58px; flex: none; }
.notif { width: 16px; height: 15px; margin-left: 18px; fill: none; stroke: #fff; stroke-width: 1; flex: none; }
```
